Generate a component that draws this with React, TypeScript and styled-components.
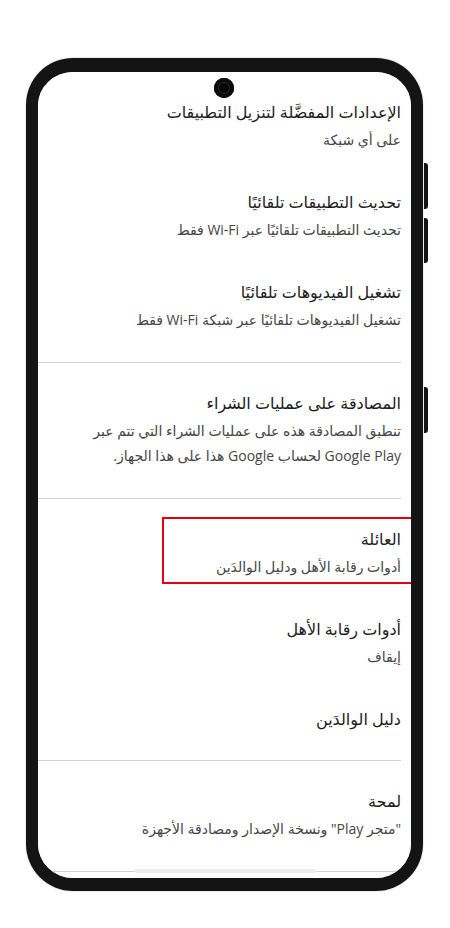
import styled, { createGlobalStyle } from 'styled-components';

const GlobalStyle = createGlobalStyle`
  html, body {
    margin: 0;
    padding: 0;
    background: #ffffff;
  }
  body {
    font-family: "Open Sans", "DejaVu Sans", sans-serif;
  }
`;

interface Entry {
  title: string;
  subtitle?: string;
  highlighted?: boolean;
}

const sections: Entry[][] = [
  [
    { title: 'الإعدادات المفضَّلة لتنزيل التطبيقات', subtitle: 'على أي شبكة' },
    { title: 'تحديث التطبيقات تلقائيًا', subtitle: 'تحديث التطبيقات تلقائيًا عبر Wi-Fi فقط' },
    { title: 'تشغيل الفيديوهات تلقائيًا', subtitle: 'تشغيل الفيديوهات تلقائيًا عبر شبكة Wi-Fi فقط' },
  ],
  [
    {
      title: 'المصادقة على عمليات الشراء',
      subtitle: 'تنطبق المصادقة هذه على عمليات الشراء التي تتم عبر Google Play لحساب Google هذا على هذا الجهاز.',
    },
  ],
  [
    { title: 'العائلة', subtitle: 'أدوات رقابة الأهل ودليل الوالدَين', highlighted: true },
    { title: 'أدوات رقابة الأهل', subtitle: 'إيقاف' },
    { title: 'دليل الوالدَين' },
  ],
  [
    { title: 'لمحة', subtitle: '"متجر Play" ونسخة الإصدار ومصادقة الأجهزة' },
  ],
];

export default function App() {
  return (
    <>
      <GlobalStyle />
      <Page>
        <Phone>
          <SideButton $top={91} $height={46} />
          <SideButton $top={146} $height={45} />
          <SideButton $top={315} $height={46} />
          <Screen>
            <Camera />
            {sections.map((items, i) => (
              <Section key={i}>
                {items.map((item) => (
                  <Item key={item.title}>
                    {item.highlighted && <Highlight />}
                    <Title>{item.title}</Title>
                    {item.subtitle && <Subtitle>{item.subtitle}</Subtitle>}
                  </Item>
                ))}
              </Section>
            ))}
            <HomeBar />
          </Screen>
        </Phone>
      </Page>
    </>
  );
}

const Page = styled.div`
  display: flex;
  padding: 58px 0 37px 26px;
`;

const Phone = styled.div`
  position: relative;
  box-sizing: border-box;
  width: 397px;
  height: 833px;
  border-style: solid;
  border-color: #141414;
  border-width: 14px 12px 13px 12px;
  border-radius: 47px;
  box-shadow: 0 0 2px rgba(0, 0, 0, 0.25);
`;

const SideButton = styled.div<{ $top: number; $height: number }>`
  position: absolute;
  right: -17px;
  top: ${({ $top }) => $top}px;
  width: 4px;
  height: ${({ $height }) => $height}px;
  background: #141414;
  border-radius: 0 3px 3px 0;
`;

const Screen = styled.div`
  position: relative;
  display: flex;
  flex-direction: column;
  height: 100%;
  overflow: hidden;
  border-radius: 35px;
  background: #ffffff;
  direction: rtl;
  padding-right: 10px;
`;

const Camera = styled.div`
  position: absolute;
  top: 6px;
  left: 50%;
  width: 20px;
  height: 20px;
  margin-left: -11px;
  border-radius: 50%;
  background: #050505;
  box-shadow: inset 0 0 0 4px #0b0b0b, inset 0 0 0 5px #262626;
`;

const Section = styled.div`
  display: flex;
  flex-direction: column;
  padding: 9px 0 11px;
  border-bottom: 1px solid #d0d0d0;
`;

const Item = styled.div`
  position: relative;
  display: flex;
  flex-direction: column;
  gap: 4px;
  padding: 20px 0 19px 30px;
  text-align: right;
`;

const Title = styled.div`
  font-size: 16px;
  line-height: 22px;
  color: #1c1c1c;
`;

const Subtitle = styled.div`
  font-size: 14px;
  line-height: 25px;
  color: #454545;
`;

const Highlight = styled.div`
  position: absolute;
  top: 9px;
  left: 124px;
  right: -12px;
  height: 63px;
  border: 2px solid #e3000f;
`;

const HomeBar = styled.div`
  position: absolute;
  bottom: 5px;
  left: 50%;
  width: 182px;
  height: 4px;
  margin-left: -91px;
  border-radius: 2px;
  background: #ececec;
`;
